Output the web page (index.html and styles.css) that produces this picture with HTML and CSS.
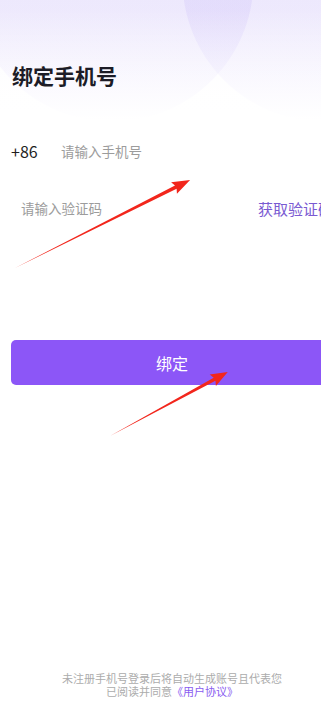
FILE: index.html
```html
<!DOCTYPE html>
<html lang="zh">
<head>
<meta charset="utf-8">
<title>绑定手机号</title>
<link rel="stylesheet" href="styles.css">
</head>
<body>
<div class="page">
  <h1 class="title">绑定手机号</h1>
  <div class="field phone">
    <span class="prefix">+86</span>
    <span class="placeholder">请输入手机号</span>
  </div>
  <div class="field code">
    <span class="placeholder">请输入验证码</span>
    <span class="get-code">获取验证码</span>
  </div>
  <button class="bind-btn" type="button">绑定</button>
  <div class="spacer"></div>
  <p class="footer"><span class="line">未注册手机号登录后将自动生成账号且代表您</span><span class="line">已阅读并同意<span class="link">《用户协议》</span></span></p>
  <svg class="annot" width="344" height="705" viewBox="0 0 344 705" aria-hidden="true">
    <g transform="translate(15 268) rotate(-26.7)">
      <polygon class="arrow" points="0,0 180,-1.8 178,-6.5 196,0 178,6.5 180,1.8"/>
    </g>
    <g transform="translate(110 436) rotate(-28.5)">
      <polygon class="arrow" points="0,0 119,-1.8 117,-6.5 134,0 117,6.5 119,1.8"/>
    </g>
  </svg>
</div>
</body>
</html>
```
FILE: styles.css
```css
html {
  overflow: hidden;
}
body {
  margin: 0;
  background: #fff;
}
.page {
  position: relative;
  width: 344px;
  min-height: 705px;
  box-sizing: border-box;
  padding: 0 11px;
  display: flex;
  flex-direction: column;
  font-family: "Noto Sans CJK SC", "Noto Sans", sans-serif;
  background:
    linear-gradient(to bottom, rgba(255,255,255,0) 10px, #fff 120px),
    radial-gradient(circle 141px at 112px -20px, rgba(175,155,245,0.15) 141px, rgba(175,155,245,0) 142px),
    radial-gradient(circle 141px at 324px -20px, rgba(175,155,245,0.15) 141px, rgba(175,155,245,0) 142px),
    linear-gradient(to bottom, #f8f6fe 0, #fff 110px);
}
.title {
  margin: 0;
  padding-top: 60px;
  font-size: 21px;
  line-height: 30px;
  font-weight: 700;
  color: #1c1c26;
  padding-left: 1px;
}
.field {
  display: flex;
  align-items: center;
  height: 52px;
}
.phone {
  margin-top: 35px;
}
.code {
  margin-top: 5px;
  padding-left: 10px;
  justify-content: space-between;
}
.prefix {
  width: 50px;
  font-size: 16px;
  color: #1f1f1f;
}
.placeholder {
  font-size: 13.5px;
  color: #9c9c9c;
}
.get-code {
  font-size: 15px;
  color: #7a5ad2;
  white-space: nowrap;
}
.bind-btn {
  margin-top: 106px;
  height: 45px;
  border: none;
  border-radius: 5px;
  background: #8c56f7;
  color: #fff;
  font-family: inherit;
  font-size: 16px;
  padding: 0;
}
.spacer {
  flex: 1;
}
.footer {
  margin: 0 0 7px;
  display: flex;
  flex-direction: column;
  align-items: center;
  font-size: 11px;
  line-height: 14px;
  color: #acacac;
}
.line {
  display: block;
  height: 13px;
  line-height: 13px;
}
.link {
  color: #8a5cf0;
}
.annot {
  position: absolute;
  left: 0;
  top: 0;
  pointer-events: none;
}
.arrow {
  fill: #f2261c;
}
```
